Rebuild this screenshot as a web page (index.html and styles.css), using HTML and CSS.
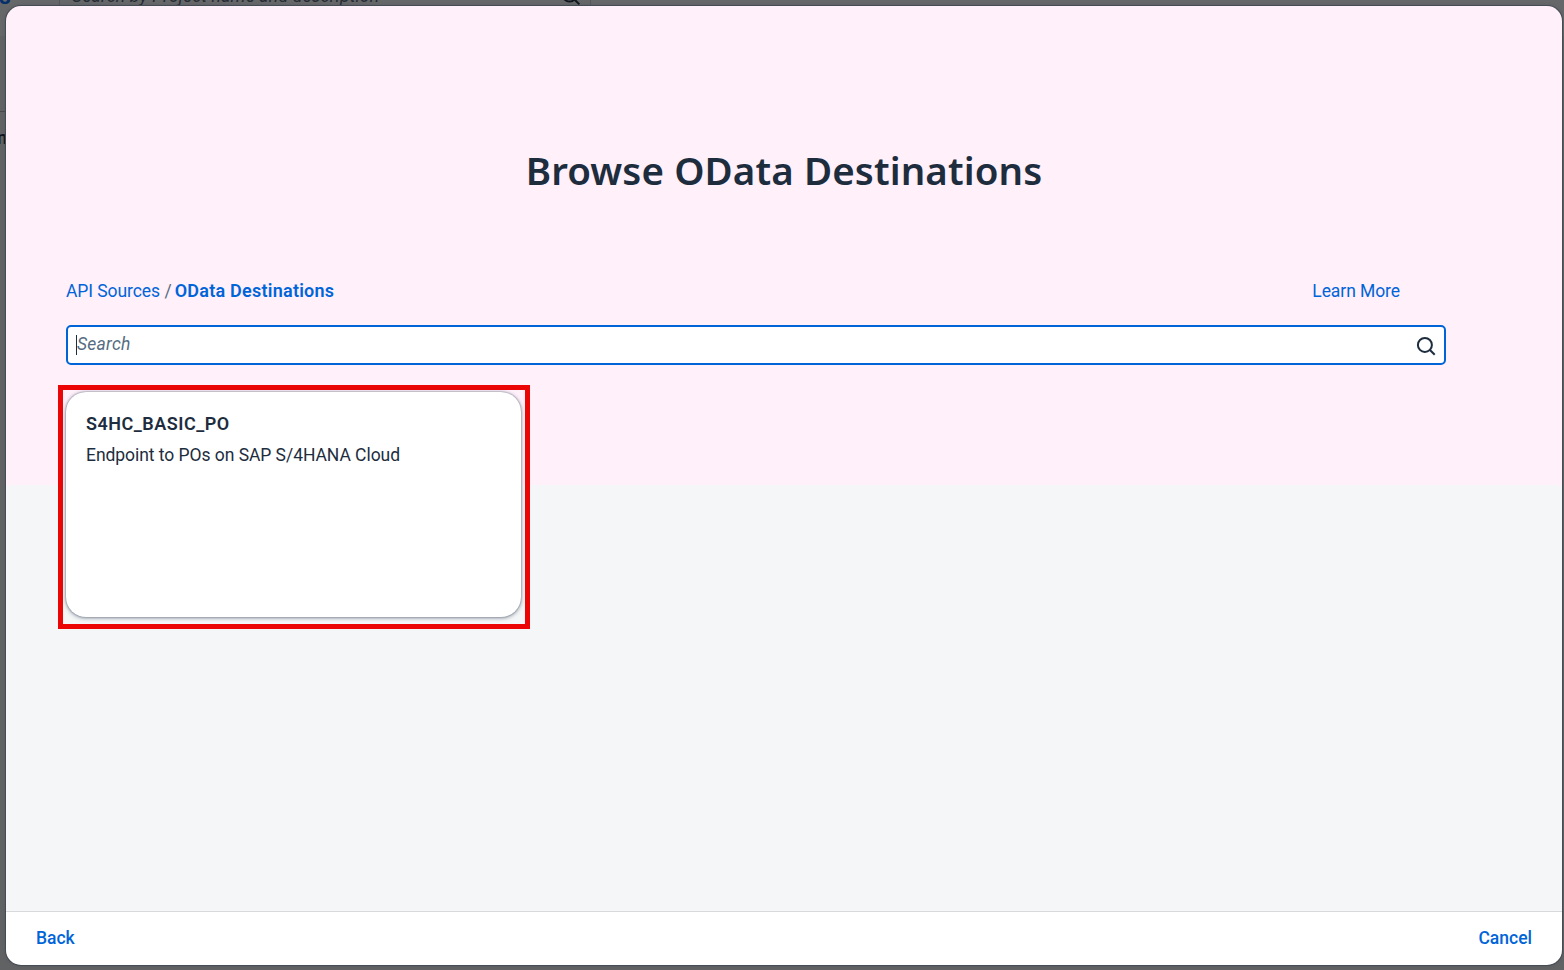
FILE: index.html
```html
<!DOCTYPE html>
<html lang="en">
<head>
<meta charset="utf-8">
<title>Browse OData Destinations</title>
<link rel="stylesheet" href="styles.css">
</head>
<body>
<div class="backdrop">
  <span class="backdrop-tab">s</span>
  <div class="backdrop-search"><span class="backdrop-placeholder">Search by Project name and description</span>
    <svg class="backdrop-icon" viewBox="0 0 20 20" width="20" height="20"><circle cx="8.6" cy="8.6" r="7" /><path d="M13.7 13.7 18.4 18.4" /></svg>
  </div>
  <div class="backdrop-table"><span class="backdrop-column">n</span></div>
</div>
<main class="dialog">
  <section class="content">
    <h1 class="title">Browse OData Destinations</h1>
    <div class="links">
      <nav class="breadcrumb"><a class="crumb">API Sources</a><span class="slash">/</span><a class="crumb-current">OData Destinations</a></nav>
      <a class="learn">Learn More</a>
    </div>
    <div class="search">
      <span class="caret"></span><span class="placeholder">Search</span>
      <svg class="search-icon" viewBox="0 0 20 20" width="20" height="20"><circle cx="8.9" cy="8.9" r="7" /><path d="M14 14 18.7 18.7" /></svg>
    </div>
    <div class="highlight">
      <article class="card">
        <h2 class="card-title">S4HC_BASIC_PO</h2>
        <p class="card-text">Endpoint to POs on SAP S/4HANA Cloud</p>
      </article>
    </div>
  </section>
  <footer class="footer"><a class="back">Back</a><a class="cancel">Cancel</a></footer>
</main>
</body>
</html>
```
FILE: styles.css
```css
* { box-sizing: border-box; }
body {
  margin: 0;
  width: 1564px;
  height: 970px;
  overflow: hidden;
  position: relative;
  background: #616263;
  color: #1d2d3e;
  font: 17.5px/24px Roboto, "Open Sans", sans-serif;
}
.backdrop { position: absolute; inset: 0; background: linear-gradient(#666768 0 36px, #616263 36px); overflow: hidden; }
.backdrop-tab { position: absolute; left: -1px; top: -15px; font-size: 23px; font-weight: 700; color: #07306a; }
.backdrop-search {
  position: absolute; left: 59px; top: -30px; width: 532px; height: 38px;
  border: 1px solid #555657;
}
.backdrop-placeholder { position: absolute; left: 12px; top: 13px; font-style: italic; color: #252c34; white-space: nowrap; letter-spacing: .2px; }
.backdrop-icon { position: absolute; right: 9px; top: 15px; fill: none; stroke: #10171e; stroke-width: 2; }
.backdrop-table { position: absolute; left: 0; top: 111px; width: 6px; height: 40px; border-top: 1px solid #46484a; }
.backdrop-column { position: absolute; right: -1px; top: 14px; font-size: 18px; font-weight: 600; color: #0c121e; }
.dialog {
  position: absolute; left: 6px; top: 6px; width: 1556px; height: 959px;
  display: flex; flex-direction: column;
  border-radius: 15px; overflow: hidden;
  box-shadow: 0 0 0 1px #454c56, 0 0 3px 1px #454c5666;
}
.content {
  flex: 1;
  display: flex; flex-direction: column; align-items: flex-start;
  padding: 137px 60px 0;
  background: linear-gradient(#fff0fa 0 479px, #f5f6f7 479px);
}
.title {
  align-self: center; margin: 0; height: 54px;
  font: 600 38.5px/54px "Noto Sans", sans-serif;
  letter-spacing: .1px;
  white-space: nowrap;
}
.links { display: flex; justify-content: space-between; width: 1334px; margin-top: 82px; color: #0064d9; }
.breadcrumb { display: flex; }
.crumb, .learn { letter-spacing: -.08px; }
.slash { margin: 0 3px 0 4.5px; color: #556b82; }
.crumb-current { font-size: 18px; font-weight: 600; letter-spacing: .24px; }
.search {
  display: flex; align-items: center; width: 1380px; height: 40px; margin-top: 22px;
  padding: 0 8px; border: 2px solid #0064d9; border-radius: 5px; background: #fff;
}
.caret { width: 1px; height: 20px; background: #1d2d3e; }
.placeholder { flex: 1; margin-top: -3px; font-style: italic; letter-spacing: .25px; color: #556b82; }
.search-icon { fill: none; stroke: #1d2d3e; stroke-width: 2; margin-top: 1px; }
.highlight { width: 472px; height: 244px; margin: 20px 0 0 -8px; padding: 2px 3px; border: 5px solid #eb0505; }
.card {
  width: 455px; height: 225px; padding: 20px; border-radius: 20px; background: #fff;
  box-shadow: 0 0 2px #556173d0, 0 1px 4px #556173a0;
}
.card-title { margin: 0; font-size: 18px; line-height: 24px; font-weight: 600; letter-spacing: .5px; }
.card-text { margin: 7px 0 0; white-space: nowrap; letter-spacing: -.05px; }
.footer {
  display: flex; justify-content: space-between; height: 54px; padding: 14px 30px;
  border-top: 1px solid #d9d9d9; background: #fff; color: #0064d9; font-weight: 500;
}
```
